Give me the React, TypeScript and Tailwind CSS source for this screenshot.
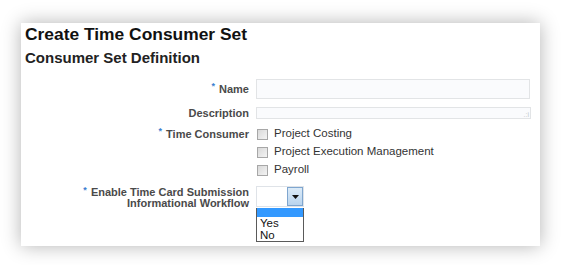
import React from 'react';

const font = { fontFamily: '"Liberation Sans", Arial, sans-serif' };

// small blue required marker
const Req = () => (
  <span className="mr-[4px] inline-block -translate-y-[3px] text-[9px] font-bold leading-none text-[#3c7fd0]">*</span>
);

const Checkbox: React.FC<{ label: string }> = ({ label }) => (
  <div className="flex h-[18px] items-center">
    <span className="ml-[1px] h-[11px] w-[11px] border border-[#a7a7a7] bg-gradient-to-br from-[#d9d9d9] to-[#f4f4f4]" />
    <span className="ml-[6px] text-[11.5px] text-[#333333]">{label}</span>
  </div>
);

export default function App() {
  return (
    <div className="h-[265px] w-[564px] overflow-hidden bg-white pl-[21px] pt-[23px]" style={font}>
      <div className="h-[223px] w-[519px] bg-white pl-[4px] pt-[1px] shadow-[0_0_18px_rgba(0,0,0,0.3)]">
        <h1 className="text-[17.4px] font-bold leading-[20px] text-[#111111]">Create Time Consumer Set</h1>
        <h2 className="mt-[5px] text-[15px] font-bold leading-[18px] text-[#222222]">Consumer Set Definition</h2>

        <div className="mt-[12px] grid grid-cols-[224px_1fr] gap-x-[7px] text-[11px]">
          {/* Name */}
          <div className="flex h-[20px] items-center justify-end font-bold text-[#4a4a4a]">
            <Req />Name
          </div>
          <div className="h-[20px] w-[274px] border border-[#e2e4e6] bg-[#fafbfd]" />

          {/* Description */}
          <div className="mt-[8px] flex h-[12px] items-center justify-end font-bold text-[#4a4a4a]">Description</div>
          <div className="relative mt-[8px] h-[12px] w-[275px] border border-[#e2e4e6] bg-[#fafbfd]">
            <span className="absolute bottom-0 right-[1px] text-[7px] leading-[7px] text-[#c4c8cc]">.:i</span>
          </div>

          {/* Time Consumer */}
          <div className="mt-[6px] flex h-[18px] items-center justify-end font-bold text-[#4a4a4a]">
            <Req />Time Consumer
          </div>
          <div className="mt-[6px]">
            <Checkbox label="Project Costing" />
            <Checkbox label="Project Execution Management" />
            <Checkbox label="Payroll" />
          </div>

          {/* Workflow */}
          <div className="mt-[7px] text-right font-bold leading-[11px] text-[#4a4a4a]">
            <div className="pt-[1px]"><Req />Enable Time Card Submission</div>
            <div>Informational Workflow</div>
          </div>
          <div className="mt-[7px] w-[48px]">
            <div className="flex h-[21px] border border-[#dfe3e8] bg-white">
              <div className="flex-1" />
              <div className="flex w-[16px] items-center justify-center border border-[#7fa6cf] bg-gradient-to-b from-[#dcebf8] to-[#b9d4ee]">
                <svg width="7" height="4" viewBox="0 0 7 4"><path d="M0 0h7L3.5 4z" fill="#111" /></svg>
              </div>
            </div>
            <div className="mt-[1px] border border-[#5a5a5a] border-t-0 bg-white text-[11.5px] leading-[12px] text-[#111]">
              <div className="h-[9px] bg-[#3399ff]" />
              <div className="pl-[3px]">Yes</div>
              <div className="pl-[3px]">No</div>
            </div>
          </div>
        </div>
      </div>
    </div>
  );
}
